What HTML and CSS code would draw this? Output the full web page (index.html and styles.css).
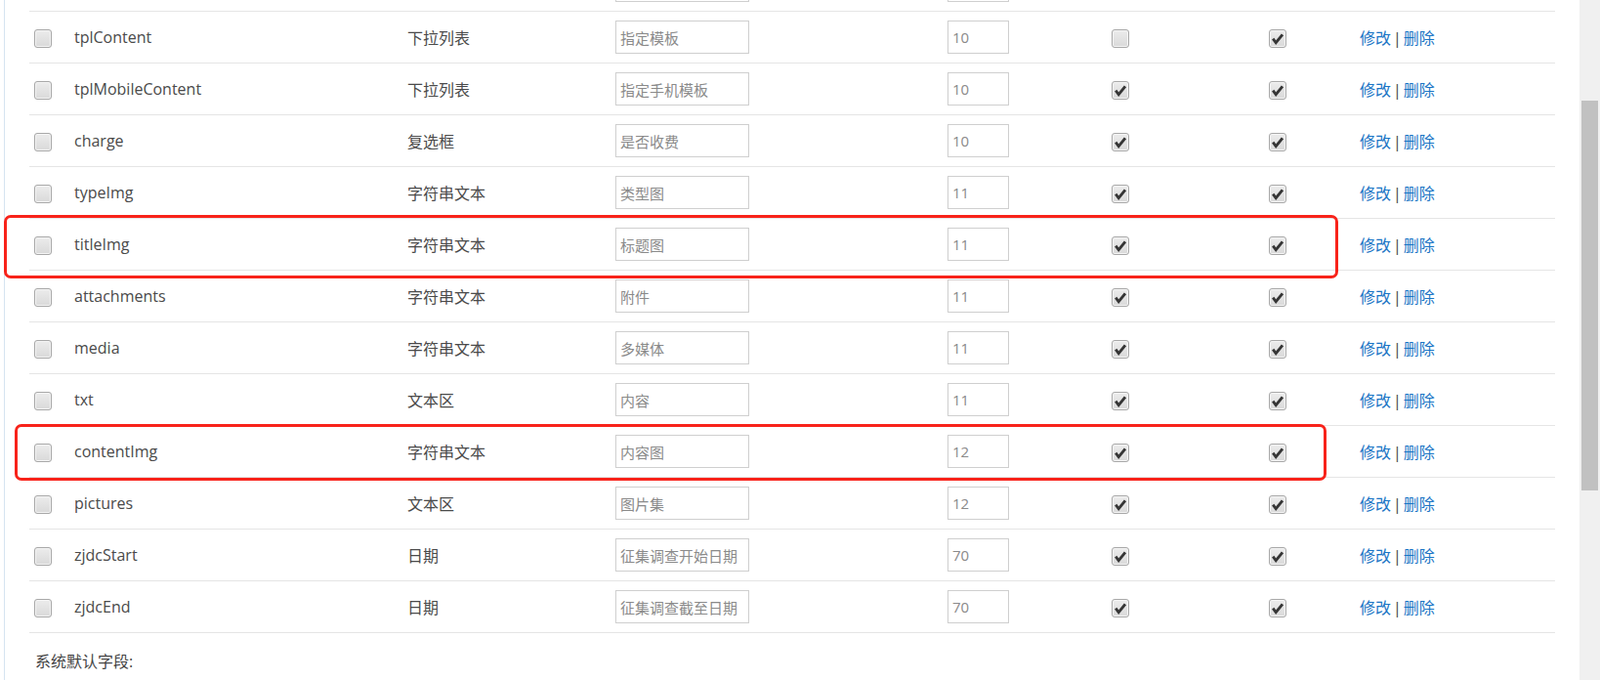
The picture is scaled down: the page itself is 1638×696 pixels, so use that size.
FILE: index.html
```
<!DOCTYPE html>
<html lang="zh-CN">
<head>
    <meta charset="UTF-8">
    <meta name="viewport" content="width=device-width, initial-scale=1.0">
    <title>字段管理</title>
    <link rel="stylesheet" href="styles.css">
</head>
<body>
    <div class="page">
        <table class="field-table">
            <colgroup>
                <col class="c-check">
                <col class="c-name">
                <col class="c-type">
                <col class="c-label">
                <col class="c-order">
                <col class="c-list">
                <col class="c-show">
                <col class="c-ops">
            </colgroup>
            <tbody id="fieldRows">
                <!-- row scrolled off above the viewport, only input edges show -->
                <tr class="row-prev">
                    <td></td>
                    <td></td>
                    <td></td>
                    <td><input class="ipt" type="text"></td>
                    <td><input class="ipt ipt-num" type="text"></td>
                    <td></td>
                    <td></td>
                    <td></td>
                </tr>
            </tbody>
        </table>

        <p class="note">系统默认字段:</p>

        <div class="mark mark-title"></div>
        <div class="mark mark-content"></div>
    </div>

    <div class="scrollbar">
        <div class="thumb"></div>
    </div>

    <script>
        const fields = [
            { name: 'tplContent', type: '下拉列表', label: '指定模板', order: 10, list: false, show: true },
            { name: 'tplMobileContent', type: '下拉列表', label: '指定手机模板', order: 10, list: true, show: true },
            { name: 'charge', type: '复选框', label: '是否收费', order: 10, list: true, show: true },
            { name: 'typeImg', type: '字符串文本', label: '类型图', order: 11, list: true, show: true },
            { name: 'titleImg', type: '字符串文本', label: '标题图', order: 11, list: true, show: true },
            { name: 'attachments', type: '字符串文本', label: '附件', order: 11, list: true, show: true },
            { name: 'media', type: '字符串文本', label: '多媒体', order: 11, list: true, show: true },
            { name: 'txt', type: '文本区', label: '内容', order: 11, list: true, show: true },
            { name: 'contentImg', type: '字符串文本', label: '内容图', order: 12, list: true, show: true },
            { name: 'pictures', type: '文本区', label: '图片集', order: 12, list: true, show: true },
            { name: 'zjdcStart', type: '日期', label: '征集调查开始日期', order: 70, list: true, show: true },
            { name: 'zjdcEnd', type: '日期', label: '征集调查截至日期', order: 70, list: true, show: true }
        ];

        const tick = '<svg viewBox="0 0 18 18" width="16" height="16"><path d="M3.6 8.6 L7 13.2 L14.6 3.8" fill="none" stroke="#353535" stroke-width="3.2" stroke-linejoin="miter"/></svg>';

        function box(on) {
            return `<span class="chk${on ? ' on' : ''}">${on ? tick : ''}</span>`;
        }

        const rows = document.getElementById('fieldRows');
        fields.forEach(f => {
            const tr = document.createElement('tr');
            tr.innerHTML = `
                <td class="cell-check">${box(false)}</td>
                <td>${f.name}</td>
                <td>${f.type}</td>
                <td><input class="ipt" type="text" value="${f.label}"></td>
                <td><input class="ipt ipt-num" type="text" value="${f.order}"></td>
                <td>${box(f.list)}</td>
                <td>${box(f.show)}</td>
                <td><a href="#" class="link">修改</a><span class="sep">|</span><a href="#" class="link">删除</a></td>
            `;
            rows.appendChild(tr);
        });
    </script>
</body>
</html>
```
FILE: styles.css
```
* {
    box-sizing: border-box;
    margin: 0;
    padding: 0;
}

html, body {
    height: 100%;
    overflow: hidden;
}

body {
    display: flex;
    background: #fff;
    color: #4a4a4a;
    font-family: "Open Sans", "Noto Sans CJK SC", sans-serif;
    font-size: 16px;
}

.page {
    position: relative;
    flex: 1;
    margin-left: 4px;
    padding: 0 25px;
    border-left: 1px solid #d5e4f0;
}

.field-table {
    width: 100%;
    margin-top: -41px;
    table-layout: fixed;
    border-collapse: separate;
    border-spacing: 0;
}

.c-check { width: 46px; }
.c-name { width: 341px; }
.c-type { width: 213px; }
.c-label { width: 340px; }
.c-order { width: 168px; }
.c-list { width: 161px; }
.c-show { width: 93px; }
.c-ops { width: 200px; }

.field-table td {
    height: 53px;
    padding: 0;
    border-bottom: 1px solid #e5e5e5;
    vertical-align: middle;
    white-space: nowrap;
}

.field-table td.cell-check {
    padding-left: 5px;
}

.chk {
    display: inline-block;
    width: 18px;
    height: 19px;
    border: 1px solid #a8a8a8;
    border-radius: 3px;
    background: linear-gradient(#ececec, #d9d9d9);
    box-shadow: inset 0 0 0 1px #f4f4f4;
    vertical-align: middle;
    text-align: center;
    line-height: 0;
}

.chk svg {
    margin-top: 1px;
}

.ipt {
    width: 137px;
    height: 34px;
    padding: 0 4px;
    border: 1px solid #cfcfcf;
    background: #fff;
    color: #8a8a8a;
    font-family: "Open Sans", "Noto Sans CJK SC", sans-serif;
    font-size: 15px;
    vertical-align: middle;
    outline: none;
}

.ipt-num {
    width: 63px;
}

.link {
    color: #1a75c5;
    text-decoration: none;
}

.sep {
    margin: 0 2px;
    color: #444;
}

.note {
    margin-top: 18px;
    padding-left: 6px;
    line-height: 22px;
    color: #444;
}

.mark {
    position: absolute;
    border: 3px solid #f8231a;
    border-radius: 7px;
}

.mark-title {
    left: -1px;
    top: 220px;
    width: 1366px;
    height: 65px;
}

.mark-content {
    left: 10px;
    top: 434px;
    width: 1343px;
    height: 58px;
}

.scrollbar {
    width: 21px;
    padding: 103px 2px 0;
    background: #f0f0f0;
}

.scrollbar .thumb {
    height: 399px;
    background: #c1c1c1;
}
```
